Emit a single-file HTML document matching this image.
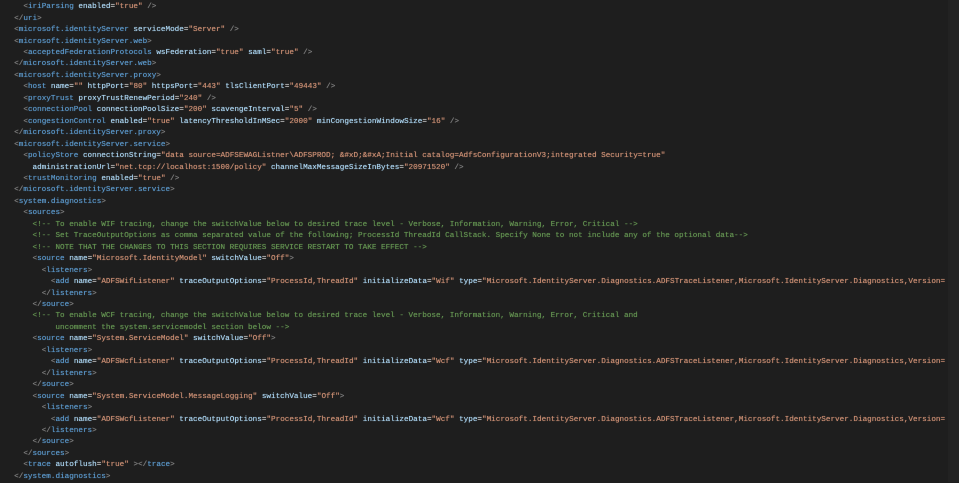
<!DOCTYPE html>
<html><head><meta charset="utf-8"><style>
html,body{margin:0;padding:0;background:#1e1e1e;width:959px;height:482px;overflow:hidden}
pre{position:absolute;left:5px;top:2.2px;margin:0;font-family:"Liberation Mono",monospace;font-size:7.65px;line-height:11.46px;color:#c8c8c8;white-space:pre;text-shadow:0 0 0.6px currentColor}
.b{color:#7f7f7f}.t{color:#5a96c8}.a{color:#a9d2ee}.s{color:#c98d72}.c{color:#629150}.e{color:#c8c8c8}
.sb{position:absolute;right:0;top:0;width:11px;height:482px;background:#222}
</style></head><body>
<div class="sb"></div>
<pre><span class="e">    </span><span class="b">&lt;</span><span class="t">iriParsing</span> <span class="a">enabled</span>=<span class="s">"true"</span> <span class="b">/&gt;</span>
  <span class="b">&lt;/</span><span class="t">uri</span><span class="b">&gt;</span>
  <span class="b">&lt;</span><span class="t">microsoft.identityServer</span> <span class="a">serviceMode</span>=<span class="s">"Server"</span> <span class="b">/&gt;</span>
  <span class="b">&lt;</span><span class="t">microsoft.identityServer.web</span><span class="b">&gt;</span>
    <span class="b">&lt;</span><span class="t">acceptedFederationProtocols</span> <span class="a">wsFederation</span>=<span class="s">"true"</span> <span class="a">saml</span>=<span class="s">"true"</span> <span class="b">/&gt;</span>
  <span class="b">&lt;/</span><span class="t">microsoft.identityServer.web</span><span class="b">&gt;</span>
  <span class="b">&lt;</span><span class="t">microsoft.identityServer.proxy</span><span class="b">&gt;</span>
    <span class="b">&lt;</span><span class="t">host</span> <span class="a">name</span>=<span class="s">""</span> <span class="a">httpPort</span>=<span class="s">"80"</span> <span class="a">httpsPort</span>=<span class="s">"443"</span> <span class="a">tlsClientPort</span>=<span class="s">"49443"</span> <span class="b">/&gt;</span>
    <span class="b">&lt;</span><span class="t">proxyTrust</span> <span class="a">proxyTrustRenewPeriod</span>=<span class="s">"240"</span> <span class="b">/&gt;</span>
    <span class="b">&lt;</span><span class="t">connectionPool</span> <span class="a">connectionPoolSize</span>=<span class="s">"200"</span> <span class="a">scavengeInterval</span>=<span class="s">"5"</span> <span class="b">/&gt;</span>
    <span class="b">&lt;</span><span class="t">congestionControl</span> <span class="a">enabled</span>=<span class="s">"true"</span> <span class="a">latencyThresholdInMSec</span>=<span class="s">"2000"</span> <span class="a">minCongestionWindowSize</span>=<span class="s">"16"</span> <span class="b">/&gt;</span>
  <span class="b">&lt;/</span><span class="t">microsoft.identityServer.proxy</span><span class="b">&gt;</span>
  <span class="b">&lt;</span><span class="t">microsoft.identityServer.service</span><span class="b">&gt;</span>
    <span class="b">&lt;</span><span class="t">policyStore</span> <span class="a">connectionString</span>=<span class="s">"data source=ADFSEWAGListner\ADFSPROD; &amp;#xD;&amp;#xA;Initial catalog=AdfsConfigurationV3;integrated Security=true"</span>
      <span class="a">administrationUrl</span>=<span class="s">"net.tcp://localhost:1500/policy"</span> <span class="a">channelMaxMessageSizeInBytes</span>=<span class="s">"20971520"</span> <span class="b">/&gt;</span>
    <span class="b">&lt;</span><span class="t">trustMonitoring</span> <span class="a">enabled</span>=<span class="s">"true"</span> <span class="b">/&gt;</span>
  <span class="b">&lt;/</span><span class="t">microsoft.identityServer.service</span><span class="b">&gt;</span>
  <span class="b">&lt;</span><span class="t">system.diagnostics</span><span class="b">&gt;</span>
    <span class="b">&lt;</span><span class="t">sources</span><span class="b">&gt;</span>
      <span class="c">&lt;!-- To enable WIF tracing, change the switchValue below to desired trace level - Verbose, Information, Warning, Error, Critical --&gt;</span>
      <span class="c">&lt;!-- Set TraceOutputOptions as comma separated value of the following; ProcessId ThreadId CallStack. Specify None to not include any of the optional data--&gt;</span>
      <span class="c">&lt;!-- NOTE THAT THE CHANGES TO THIS SECTION REQUIRES SERVICE RESTART TO TAKE EFFECT --&gt;</span>
      <span class="b">&lt;</span><span class="t">source</span> <span class="a">name</span>=<span class="s">"Microsoft.IdentityModel"</span> <span class="a">switchValue</span>=<span class="s">"Off"</span><span class="b">&gt;</span>
        <span class="b">&lt;</span><span class="t">listeners</span><span class="b">&gt;</span>
          <span class="b">&lt;</span><span class="t">add</span> <span class="a">name</span>=<span class="s">"ADFSWifListener"</span> <span class="a">traceOutputOptions</span>=<span class="s">"ProcessId,ThreadId"</span> <span class="a">initializeData</span>=<span class="s">"Wif"</span> <span class="a">type</span>=<span class="s">"Microsoft.IdentityServer.Diagnostics.ADFSTraceListener,Microsoft.IdentityServer.Diagnostics,Version=</span>
        <span class="b">&lt;/</span><span class="t">listeners</span><span class="b">&gt;</span>
      <span class="b">&lt;/</span><span class="t">source</span><span class="b">&gt;</span>
      <span class="c">&lt;!-- To enable WCF tracing, change the switchValue below to desired trace level - Verbose, Information, Warning, Error, Critical and</span>
<span class="c">           uncomment the system.servicemodel section below --&gt;</span>
      <span class="b">&lt;</span><span class="t">source</span> <span class="a">name</span>=<span class="s">"System.ServiceModel"</span> <span class="a">switchValue</span>=<span class="s">"Off"</span><span class="b">&gt;</span>
        <span class="b">&lt;</span><span class="t">listeners</span><span class="b">&gt;</span>
          <span class="b">&lt;</span><span class="t">add</span> <span class="a">name</span>=<span class="s">"ADFSWcfListener"</span> <span class="a">traceOutputOptions</span>=<span class="s">"ProcessId,ThreadId"</span> <span class="a">initializeData</span>=<span class="s">"Wcf"</span> <span class="a">type</span>=<span class="s">"Microsoft.IdentityServer.Diagnostics.ADFSTraceListener,Microsoft.IdentityServer.Diagnostics,Version=</span>
        <span class="b">&lt;/</span><span class="t">listeners</span><span class="b">&gt;</span>
      <span class="b">&lt;/</span><span class="t">source</span><span class="b">&gt;</span>
      <span class="b">&lt;</span><span class="t">source</span> <span class="a">name</span>=<span class="s">"System.ServiceModel.MessageLogging"</span> <span class="a">switchValue</span>=<span class="s">"Off"</span><span class="b">&gt;</span>
        <span class="b">&lt;</span><span class="t">listeners</span><span class="b">&gt;</span>
          <span class="b">&lt;</span><span class="t">add</span> <span class="a">name</span>=<span class="s">"ADFSWcfListener"</span> <span class="a">traceOutputOptions</span>=<span class="s">"ProcessId,ThreadId"</span> <span class="a">initializeData</span>=<span class="s">"Wcf"</span> <span class="a">type</span>=<span class="s">"Microsoft.IdentityServer.Diagnostics.ADFSTraceListener,Microsoft.IdentityServer.Diagnostics,Version=</span>
        <span class="b">&lt;/</span><span class="t">listeners</span><span class="b">&gt;</span>
      <span class="b">&lt;/</span><span class="t">source</span><span class="b">&gt;</span>
    <span class="b">&lt;/</span><span class="t">sources</span><span class="b">&gt;</span>
    <span class="b">&lt;</span><span class="t">trace</span> <span class="a">autoflush</span>=<span class="s">"true"</span> <span class="b">&gt;&lt;/</span><span class="t">trace</span><span class="b">&gt;</span>
  <span class="b">&lt;/</span><span class="t">system.diagnostics</span><span class="b">&gt;</span></pre>
</body></html>
